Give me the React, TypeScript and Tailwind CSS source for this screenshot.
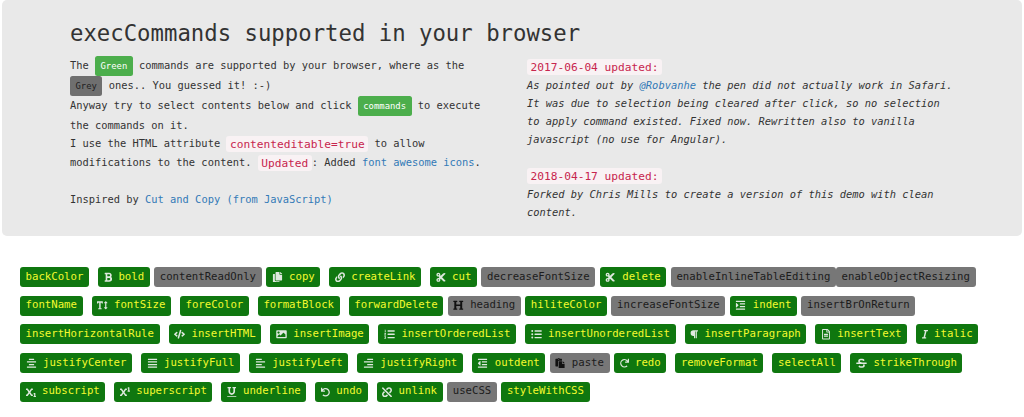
import React from "react";
import {
  FaBold, FaCopy, FaLink, FaCut, FaTextHeight, FaHeading, FaIndent, FaCode, FaImage,
  FaListOl, FaListUl, FaParagraph, FaRegFileAlt, FaItalic, FaAlignCenter, FaAlignJustify,
  FaAlignLeft, FaAlignRight, FaOutdent, FaPaste, FaRedo, FaStrikethrough, FaSubscript,
  FaSuperscript, FaUnderline, FaUndo, FaUnlink,
} from "react-icons/fa";

type Cmd = { n: string; off?: boolean; I?: React.ComponentType<{ className?: string }>; w?: string };

const cmds: Cmd[] = [
  { n: "backColor" },
  { n: "bold", I: FaBold, w: "w-[8.5px]" },
  { n: "contentReadOnly", off: true },
  { n: "copy", I: FaCopy, w: "w-[11px]" },
  { n: "createLink", I: FaLink, w: "w-[10px]" },
  { n: "cut", I: FaCut, w: "w-[10px]" },
  { n: "decreaseFontSize", off: true },
  { n: "delete", I: FaCut, w: "w-[10.5px]" },
  { n: "enableInlineTableEditing", off: true },
  { n: "enableObjectResizing", off: true },
  { n: "fontName" },
  { n: "fontSize", I: FaTextHeight, w: "w-[10.5px]" },
  { n: "foreColor" },
  { n: "formatBlock" },
  { n: "forwardDelete" },
  { n: "heading", off: true, I: FaHeading, w: "w-[10.5px]" },
  { n: "hiliteColor" },
  { n: "increaseFontSize", off: true },
  { n: "indent", I: FaIndent, w: "w-[11px]" },
  { n: "insertBrOnReturn", off: true },
  { n: "insertHorizontalRule" },
  { n: "insertHTML", I: FaCode, w: "w-[11px]" },
  { n: "insertImage", I: FaImage, w: "w-[11px]" },
  { n: "insertOrderedList", I: FaListOl, w: "w-[11px]" },
  { n: "insertUnorderedList", I: FaListUl, w: "w-[11px]" },
  { n: "insertParagraph", I: FaParagraph, w: "w-[8px]" },
  { n: "insertText", I: FaRegFileAlt, w: "w-[10px]" },
  { n: "italic", I: FaItalic, w: "w-[6px]" },
  { n: "justifyCenter", I: FaAlignCenter, w: "w-[11px]" },
  { n: "justifyFull", I: FaAlignJustify, w: "w-[11px]" },
  { n: "justifyLeft", I: FaAlignLeft, w: "w-[11px]" },
  { n: "justifyRight", I: FaAlignRight, w: "w-[11px]" },
  { n: "outdent", I: FaOutdent, w: "w-[11px]" },
  { n: "paste", off: true, I: FaPaste, w: "w-[10px]" },
  { n: "redo", I: FaRedo, w: "w-[9px]" },
  { n: "removeFormat" },
  { n: "selectAll" },
  { n: "strikeThrough", I: FaStrikethrough, w: "w-[11px]" },
  { n: "subscript", I: FaSubscript, w: "w-[10px]" },
  { n: "superscript", I: FaSuperscript, w: "w-[10px]" },
  { n: "underline", I: FaUnderline, w: "w-[9.5px]" },
  { n: "undo", I: FaUndo, w: "w-[9px]" },
  { n: "unlink", I: FaUnlink, w: "w-[10px]" },
  { n: "useCSS", off: true },
  { n: "styleWithCSS" },
];

function Chip({ c }: { c: Cmd }) {
  const I = c.I;
  return (
    <span
      className={
        "flex h-[20px] items-center rounded-[3px] px-[5.6px] text-[10.67px] leading-none " +
        (c.off ? "bg-[#777777] text-[#1c1c1c]" : "mx-[4.5px] bg-[#0f770f] text-[#f4fa2e]")
      }
    >
      {I && (
        <span className={"mr-[6.4px] flex shrink-0 items-center justify-center " + c.w}>
          <I className={"h-[10.5px] w-full " + (c.off ? "text-[#111111]" : "text-[#dfe9df]")} />
        </span>
      )}
      {c.n}
    </span>
  );
}

const Code = ({ children }: { children: React.ReactNode }) => (
  <code className="rounded-[3px] bg-[#f9f2f4] px-[3.5px] py-[1.5px] text-[11.2px] text-[#c7254e] [font-family:inherit]">
    {children}
  </code>
);

const A = ({ children }: { children: React.ReactNode }) => <a className="text-[#337ab7]">{children}</a>;

const Label = ({ grey, children }: { grey?: boolean; children: React.ReactNode }) => (
  <span
    className={
      "inline-block rounded-[2.5px] px-[5.5px] py-[4.5px] align-middle text-[8.9px] leading-[11px] " +
      (grey ? "bg-[#6f6f6f] text-[#1f1f1f]" : "bg-[#4cae4c] text-white")
    }
  >
    {children}
  </span>
);

export default function App() {
  return (
    <div className="min-h-[417px] bg-white text-[10.4px] leading-[18px] text-[#333333] [font-family:'DejaVu_Sans_Mono',monospace]">
      <div className="mx-[2px] h-[236px] rounded-[5px] bg-[#e9e9e9] pl-[68px] pt-[21px]">
        <h1 className="mb-[10px] text-[22.3px] leading-[25px] font-normal">execCommands supported in your browser</h1>
        <div className="flex gap-[37px]">
          <div className="w-[420px]">
            <p>
              The <Label>Green</Label> commands are supported by your browser, where as the <Label grey>Grey</Label> ones.. You guessed it! :-)
              <br />
              Anyway try to select contents below and click <Label>commands</Label> to execute the commands on it.
              <br />
              I use the HTML attribute <Code>contenteditable=true</Code> to allow modifications to the content. <Code>Updated</Code>: Added <A>font awesome icons</A>.
              <br />
              <br />
              Inspired by <A>Cut and Copy (from JavaScript)</A>
            </p>
          </div>
          <div className="w-[428px] pt-px">
            <Code>2017-06-04 updated:</Code>
            <br />
            <em>
              As pointed out by <A>@Robvanhe</A> the pen did not actually work in Safari. It was due to selection being cleared after click, so no selection to apply command existed. Fixed now. Rewritten also to vanilla javascript (no use for Angular).
            </em>
            <br />
            <br />
            <Code>2018-04-17 updated:</Code>
            <br />
            <em>Forked by Chris Mills to create a version of this demo with clean content.</em>
          </div>
        </div>
      </div>
      <div className="mt-[31px] ml-[15.5px] flex w-[992px] flex-wrap gap-y-[8.7px]">
        {cmds.map((c) => (
          <Chip key={c.n} c={c} />
        ))}
      </div>
    </div>
  );
}
